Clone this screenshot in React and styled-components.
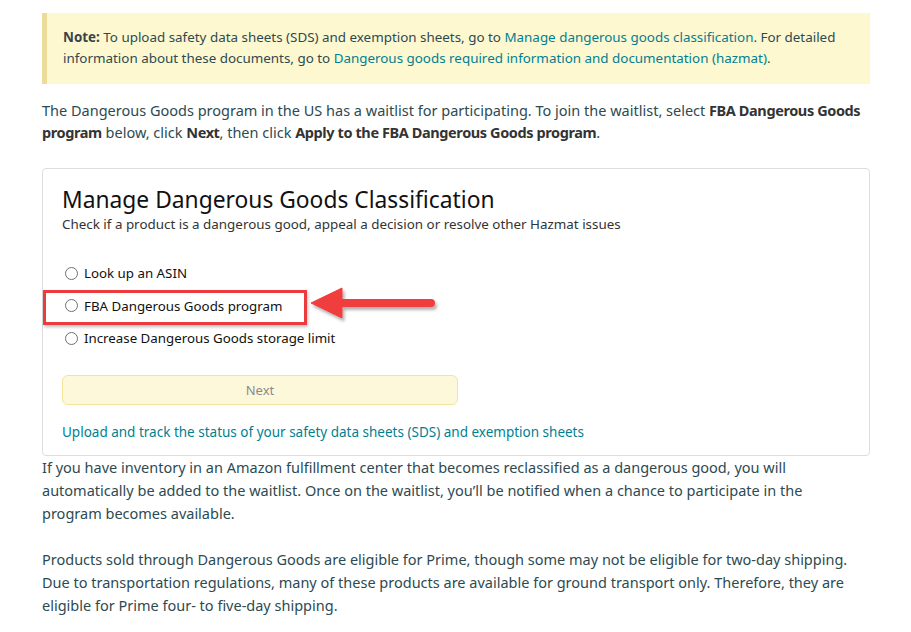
import React from "react";
import styled, { createGlobalStyle } from "styled-components";

const GlobalStyle = createGlobalStyle`
    body {
        margin: 0;
        background: #fff;
        font-family: "Noto Sans", "Open Sans", Arial, sans-serif;
        color: #2d4a51;
    }
`;

const Page = styled.div`
    width: 828px;
    padding: 13px 0 0 42px;
`;

const Note = styled.div`
    background: #fdf8cf;
    border-left: 5px solid #ebdc9c;
    padding: 14px 20px 15px 16px;
    font-size: 13.4px;
    line-height: 21px;

    & > b {
        color: #3a4448;
    }
`;

const Link = styled.a`
    color: #007f92;
    text-decoration: none;
    cursor: pointer;
`;

const Para = styled.p`
    margin: ${(p) => p.$top || 0}px 0 0;
    max-width: 821px;
    font-size: 14.5px;
    line-height: ${(p) => p.$lh || 23}px;

    & > b {
        color: #333;
        letter-spacing: -0.4px;
    }
`;

const Card = styled.div`
    margin-top: 25px;
    border: 1px solid #ddd;
    border-radius: 4px;
    padding: 16px 19px 13px;
`;

const Title = styled.h2`
    margin: 0;
    font-weight: 400;
    font-size: 22.8px;
    line-height: 30px;
    color: #111;
`;

const Subtitle = styled.div`
    font-size: 13.4px;
    line-height: 18px;
    color: #333;
`;

const Options = styled.div`
    margin-top: 24px;
    display: flex;
    flex-direction: column;
`;

const Option = styled.label`
    position: relative;
    display: flex;
    align-items: center;
    gap: 6px;
    height: 32.5px;
    padding-left: 3px;
    font-size: 13.3px;
    color: #111;

    ${(p) =>
        p.$marked &&
        `
        &::before {
            content: "";
            position: absolute;
            left: -19px;
            top: 0;
            width: 264px;
            height: 35px;
            box-sizing: border-box;
            border: 3px solid #ec3b3e;
            box-shadow: 1px 2px 3px rgba(0, 0, 0, 0.25);
        }
    `}
`;

const Radio = styled.span`
    width: 13px;
    height: 13px;
    box-sizing: border-box;
    border: 1px solid #6f6f6f;
    border-radius: 50%;
    background: #fff;
`;

const Arrow = styled.svg`
    position: absolute;
    left: 249px;
    top: -4px;
    overflow: visible;
`;

const NextButton = styled.button`
    display: block;
    margin-top: 20px;
    width: 396px;
    height: 30px;
    background: #fef8db;
    border: 1px solid #f4e39a;
    border-radius: 6px;
    font-family: inherit;
    font-size: 13px;
    color: #8a8a8a;
`;

const CardLink = styled(Link)`
    display: block;
    margin-top: 17px;
    font-size: 13.5px;
    line-height: 20px;
`;

export default function App() {
    return (
        <Page>
            <GlobalStyle />
            <Note>
                <b>Note:</b> To upload safety data sheets (SDS) and exemption
                sheets, go to <Link>Manage dangerous goods classification</Link>
                . For detailed information about these documents, go to{" "}
                <Link>
                    Dangerous goods required information and documentation
                    (hazmat)
                </Link>
                .
            </Note>

            <Para $top={15} $lh={22}>
                The Dangerous Goods program in the US has a waitlist for
                participating. To join the waitlist, select{" "}
                <b>FBA Dangerous Goods program</b> below, click <b>Next</b>,
                then click <b>Apply to the FBA Dangerous Goods program</b>.
            </Para>

            <Card>
                <Title>Manage Dangerous Goods Classification</Title>
                <Subtitle>
                    Check if a product is a dangerous good, appeal a decision or
                    resolve other Hazmat issues
                </Subtitle>

                <Options>
                    <Option>
                        <Radio />
                        Look up an ASIN
                    </Option>
                    <Option $marked>
                        <Radio />
                        FBA Dangerous Goods program
                        <Arrow width="124" height="40" viewBox="0 0 124 40">
                            <defs>
                                <filter id="sh" x="-20%" y="-50%" width="140%" height="200%">
                                    <feDropShadow dx="2" dy="3" stdDeviation="1.5" floodColor="#000" floodOpacity="0.3" />
                                </filter>
                            </defs>
                            <g filter="url(#sh)" fill="#f03c3e" stroke="#f03c3e">
                                <line x1="28" y1="17" x2="120" y2="17" strokeWidth="8" strokeLinecap="round" />
                                <polygon points="0,17 31,2 31,32" strokeWidth="1" strokeLinejoin="round" />
                            </g>
                        </Arrow>
                    </Option>
                    <Option>
                        <Radio />
                        Increase Dangerous Goods storage limit
                    </Option>
                </Options>

                <NextButton>Next</NextButton>

                <CardLink>
                    Upload and track the status of your safety data sheets (SDS)
                    and exemption sheets
                </CardLink>
            </Card>

            <Para>
                If you have inventory in an Amazon fulfillment center that
                becomes reclassified as a dangerous good, you will automatically
                be added to the waitlist. Once on the waitlist, you’ll be
                notified when a chance to participate in the program becomes
                available.
            </Para>
            <Para $top={23}>
                Products sold through Dangerous Goods are eligible for Prime,
                though some may not be eligible for two-day shipping. Due to
                transportation regulations, many of these products are available
                for ground transport only. Therefore, they are eligible for
                Prime four- to five-day shipping.
            </Para>
        </Page>
    );
}
